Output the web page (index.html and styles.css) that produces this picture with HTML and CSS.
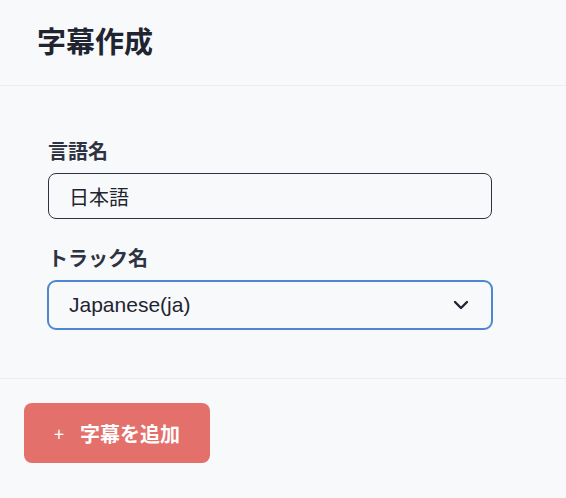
FILE: index.html
```html
<!DOCTYPE html>
<html lang="ja">
<head>
<meta charset="utf-8">
<link rel="stylesheet" href="styles.css">
</head>
<body>
<div class="panel">
  <header class="head">
    <h1 class="title">字幕作成</h1>
  </header>
  <section class="body">
    <div class="field">
      <label class="label">言語名</label>
      <div class="input">日本語</div>
    </div>
    <div class="field">
      <label class="label">トラック名</label>
      <div class="select">
        <span>Japanese(ja)</span>
        <svg class="chev" width="16" height="10" viewBox="0 0 16 10"><path d="M2 2l6 6 6-6" fill="none" stroke="#1f2430" stroke-width="2.4" stroke-linecap="round" stroke-linejoin="round"/></svg>
      </div>
    </div>
  </section>
  <footer class="foot">
    <button class="btn"><span class="plus">+</span>字幕を追加</button>
  </footer>
</div>
</body>
</html>
```
FILE: styles.css
```css
html, body {
  margin: 0;
  padding: 0;
  background: #f8f9fb;
  font-family: "Liberation Sans", "Noto Sans CJK JP", sans-serif;
  color: #1f2430;
}
.panel {
  width: 566px;
  height: 498px;
}
.head {
  height: 86px;
  border-bottom: 1px solid #eceef2;
  padding-left: 37px;
  box-sizing: border-box;
  display: flex;
  align-items: flex-start;
}
.title {
  margin: 18px 0 0;
  font-family: "Noto Sans CJK JP", sans-serif;
  font-size: 29px;
  font-weight: 700;
  line-height: 44px;
  color: #1f2430;
}
.body {
  padding: 50px 0 0 48px;
  height: 293px;
  box-sizing: border-box;
  border-bottom: 1px solid #eceef2;
  display: flex;
  flex-direction: column;
  gap: 24px;
}
.field {
  width: 444px;
  display: flex;
  flex-direction: column;
}
.label {
  font-family: "Noto Sans CJK JP", sans-serif;
  font-size: 20px;
  font-weight: 700;
  line-height: 30px;
  color: #2d3340;
  margin-bottom: 7px;
}
.input {
  height: 46px;
  box-sizing: border-box;
  border: 1px solid #2d3340;
  border-radius: 8px;
  padding-left: 20px;
  display: flex;
  align-items: center;
  font-family: "Noto Sans CJK JP", sans-serif;
  font-size: 20px;
  color: #1f2430;
}
.select {
  height: 50px;
  margin-left: -1px;
  width: 446px;
  box-sizing: border-box;
  border: 2px solid #4d87cf;
  border-radius: 9px;
  padding: 0 22px 0 20px;
  display: flex;
  align-items: center;
  justify-content: space-between;
  font-size: 21px;
  color: #1f2430;
}
.chev {
  display: block;
}
.foot {
  padding: 24px 0 0 24px;
}
.btn {
  width: 186px;
  height: 60px;
  border: 0;
  border-radius: 8px;
  background: #e4706b;
  color: #fff;
  font-family: "Noto Sans CJK JP", sans-serif;
  font-size: 20px;
  font-weight: 700;
  display: flex;
  align-items: center;
  justify-content: center;
  padding: 0;
}
.plus {
  font-weight: 400;
  font-size: 18px;
  margin-right: 16px;
}
```
